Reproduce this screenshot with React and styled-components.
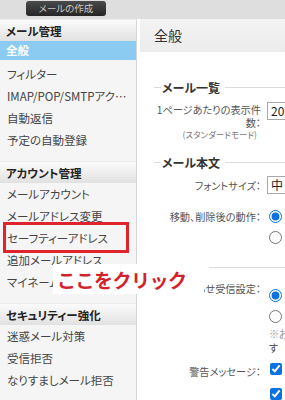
import styled, { createGlobalStyle, css } from 'styled-components'

const GlobalStyle = createGlobalStyle`
  html, body {
    margin: 0;
    padding: 0;
    background: #ffffff;
  }
  body {
    font-family: "Noto Sans CJK JP", "Noto Sans", sans-serif;
    font-feature-settings: "palt";
    color: #333;
  }
`

const Page = styled.div`
  position: relative;
  width: 285px;
  height: 400px;
  overflow: hidden;
  display: flex;
  flex-direction: column;
`

const TopBar = styled.div`
  height: 19px;
  flex: none;
  background: #dedede;
  display: flex;
  align-items: flex-start;
  padding-left: 26px;
`

const ComposeButton = styled.div`
  margin-top: 1px;
  width: 80px;
  height: 15px;
  border-radius: 3px;
  background: linear-gradient(#4a4a4a, #262626);
  color: #c8c8c8;
  font-size: 9.5px;
  line-height: 15px;
  text-align: center;
`

const Body = styled.div`
  flex: 1;
  display: grid;
  grid-template-columns: 137px 1fr;
  min-height: 0;
`

const Sidebar = styled.nav`
  background: #f5f5f5;
  border-right: 1px solid #d6d6d6;
`

const Section = styled.div`
  & + & {
    margin-top: 10px;
  }
`

const SectionHeader = styled.div`
  height: 22px;
  line-height: 22px;
  padding-left: 6px;
  background: linear-gradient(#fbfbfb, #e1e1e1);
  border-top: 1px solid #ececec;
  box-sizing: border-box;
  font-size: 11.5px;
  font-weight: 700;
  color: #222;
`

const NavItem = styled.div`
  position: relative;
  height: 22px;
  line-height: 22px;
  padding: 0 6px 0 7px;
  font-size: 11.5px;
  color: #444;
  white-space: nowrap;

  ${(p) =>
    p.$active &&
    css`
      background: linear-gradient(#8ccbf1, #8ccbf1) top / 100% 19px no-repeat;
      color: #fff;
      font-weight: 700;
      line-height: 19px;
      padding-left: 6px;
    `}

  ${(p) =>
    p.$highlight &&
    css`
      &::after {
        content: '';
        position: absolute;
        top: -5px;
        bottom: -4px;
        left: 3px;
        right: 7px;
        border: 3px solid #e0242d;
      }
    `}
`

const Main = styled.main`
  background: #fff;
  min-width: 0;
  overflow: hidden;
`

const MainTitle = styled.div`
  height: 33px;
  line-height: 32px;
  margin-left: 3px;
  padding-left: 14px;
  background: linear-gradient(#f3f3f3, #ececec);
  font-size: 14px;
  color: #333;
`

const Content = styled.div`
  padding: 27px 0 0 17px;
  width: 240px;
`

const Legend = styled.div`
  display: flex;
  align-items: center;
  height: 16px;
  margin-top: ${(p) => p.$top || 0}px;
  font-size: 12px;
  font-weight: 700;
  color: #333;
  white-space: nowrap;

  &::before {
    content: '';
    width: 7px;
    height: 1px;
    background: #dcdcdc;
    margin-right: 1px;
  }
  &::after {
    content: '';
    flex: 1;
    height: 1px;
    background: #dcdcdc;
    margin-left: 5px;
  }
`

const Divider = styled.div`
  height: 1px;
  background: #dcdcdc;
  margin-top: ${(p) => p.$top || 0}px;
  margin-left: ${(p) => p.$indent || 0}px;
`

const FormRow = styled.div`
  display: grid;
  grid-template-columns: 107px 1fr;
  column-gap: 6px;
  margin-top: ${(p) => p.$top || 0}px;
`

const Label = styled.div`
  text-align: right;
  font-size: 10.2px;
  line-height: 13px;
  color: #555;
  padding-top: ${(p) => p.$pad || 0}px;
`

const SubLabel = styled.div`
  font-size: 8.5px;
  line-height: 11px;
  color: #777;
  padding-right: 4px;
`

const Controls = styled.div`
  display: flex;
  flex-direction: column;
  gap: ${(p) => p.$gap || 8}px;
  margin-top: ${(p) => p.$top || 0}px;
`

const SelectBox = styled.div`
  width: 60px;
  height: 18px;
  box-sizing: border-box;
  border: 1px solid #a9a9a9;
  font-size: 12px;
  line-height: 16px;
  padding-left: 3px;
  color: #222;
`

const Radio = styled.input.attrs({ type: 'radio' })`
  margin: 0 0 0 2px;
  width: 13px;
  height: 13px;
  accent-color: #0b72e0;
`

const Check = styled.input.attrs({ type: 'checkbox' })`
  margin: 0 0 0 3px;
  width: 12px;
  height: 12px;
  accent-color: #0b72e0;
`

const Note = styled.div`
  margin-top: -4px;
  font-size: 10px;
  line-height: 14px;
  color: #999;
  white-space: nowrap;
  padding-left: 2px;

  & span {
    color: #444;
  }
`

const Callout = styled.div`
  position: absolute;
  left: 53px;
  top: 264px;
  width: 151px;
  height: 30px;
  padding-left: 4px;
  box-sizing: border-box;
  background: #fff;
  color: #d2232c;
  font-size: 19px;
  font-weight: 700;
  letter-spacing: -0.5px;
  line-height: 31px;
  font-feature-settings: normal;
  white-space: nowrap;
  overflow: hidden;
`

const menu = [
  {
    title: 'メール管理',
    items: ['全般', 'フィルター', 'IMAP/POP/SMTPアク…', '自動返信', '予定の自動登録'],
  },
  {
    title: 'アカウント管理',
    items: ['メールアカウント', 'メールアドレス変更', 'セーフティーアドレス', '追加メールアドレス', 'マイネーム'],
  },
  {
    title: 'セキュリティー強化',
    items: ['迷惑メール対策', '受信拒否', 'なりすましメール拒否'],
  },
]

export default function App() {
  return (
    <>
      <GlobalStyle />
      <Page>
        <TopBar>
          <ComposeButton>メールの作成</ComposeButton>
        </TopBar>
        <Body>
          <Sidebar>
            {menu.map((section) => (
              <Section key={section.title}>
                <SectionHeader>{section.title}</SectionHeader>
                {section.items.map((item) => (
                  <NavItem
                    key={item}
                    $active={item === '全般'}
                    $highlight={item === 'セーフティーアドレス'}
                  >
                    {item}
                  </NavItem>
                ))}
              </Section>
            ))}
          </Sidebar>
          <Main>
            <MainTitle>全般</MainTitle>
            <Content>
              <Legend>メール一覧</Legend>
              <FormRow $top={7}>
                <Label $pad={1}>
                  1ページあたりの表示件数：
                  <SubLabel>(スタンダードモード)</SubLabel>
                </Label>
                <Controls>
                  <SelectBox>20</SelectBox>
                </Controls>
              </FormRow>
              <Legend $top={14}>メール本文</Legend>
              <FormRow $top={6}>
                <Label $pad={3}>フォントサイズ：</Label>
                <Controls>
                  <SelectBox>中</SelectBox>
                </Controls>
              </FormRow>
              <FormRow $top={16}>
                <Label>移動、削除後の動作：</Label>
                <Controls>
                  <Radio name="move" defaultChecked />
                  <Radio name="move" />
                </Controls>
              </FormRow>
              <Divider $top={23} $indent={55} />
              <FormRow $top={14}>
                <Label>お知らせ受信設定：</Label>
                <Controls $top={7}>
                  <Radio name="notice" defaultChecked />
                  <Radio name="notice" />
                  <Note>
                    ※お知らせを受信しない場合
                    <br />
                    <span>す</span>
                  </Note>
                </Controls>
              </FormRow>
              <FormRow $top={10}>
                <Label>警告メッセージ：</Label>
                <Controls $top={-2} $gap={13}>
                  <Check defaultChecked />
                  <Check defaultChecked />
                </Controls>
              </FormRow>
            </Content>
          </Main>
        </Body>
        <Callout>ここをクリック</Callout>
      </Page>
    </>
  )
}
